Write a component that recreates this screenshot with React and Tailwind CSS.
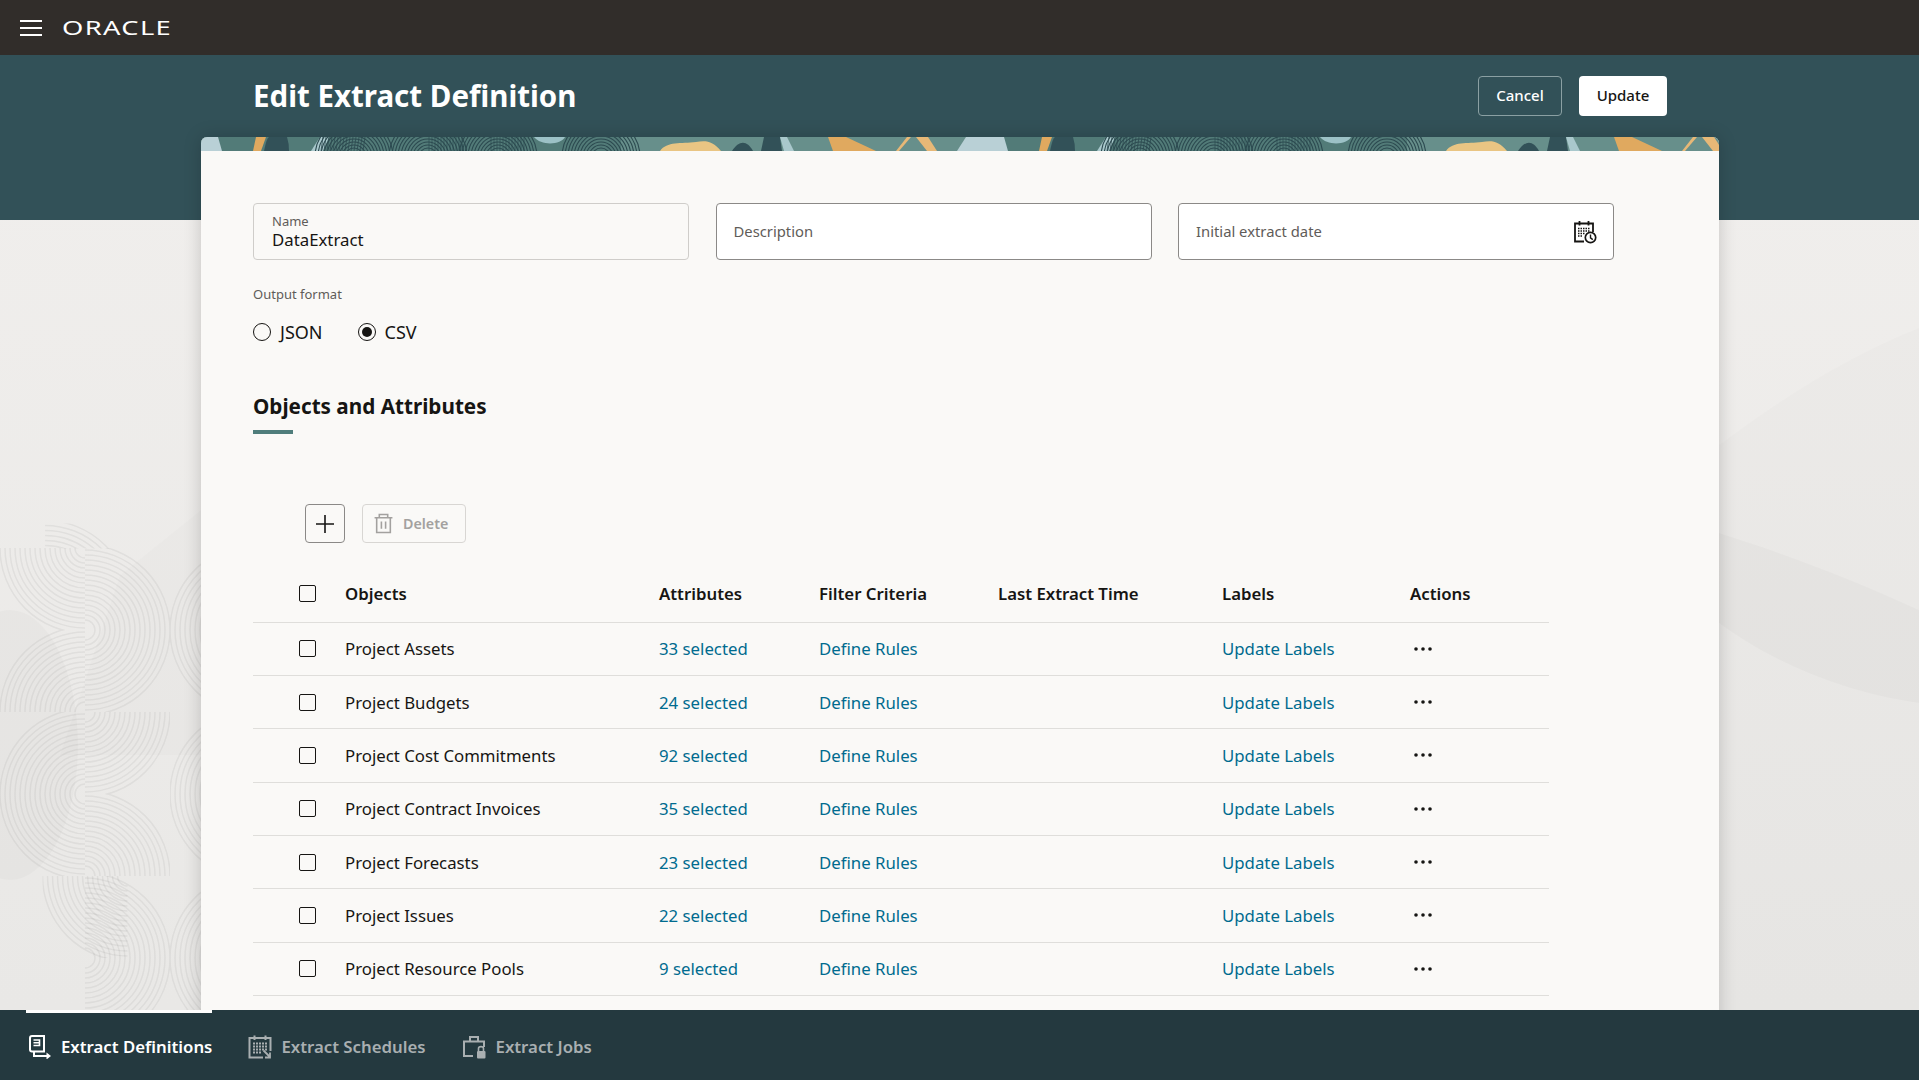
const ROWS = [
  ['Project Assets', '33 selected'],
  ['Project Budgets', '24 selected'],
  ['Project Cost Commitments', '92 selected'],
  ['Project Contract Invoices', '35 selected'],
  ['Project Forecasts', '23 selected'],
  ['Project Issues', '22 selected'],
  ['Project Resource Pools', '9 selected'],
]

const RADII = Array.from({ length: 16 }, (_, i) => 10 + i * 5)

// col, row, corner the arcs circle around (0 tl, 1 tr, 2 br, 3 bl), optional cut height
const TILES = [
  [0.53, -0.3, 3, 25],
  [0, 0, 1], [1, 0, 3], [2, 0, 2],
  [0, 1, 2], [1, 1, 0], [2, 1, 1],
  [0, 2, 2], [1, 2, 0], [2, 2, 2],
  [0, 3, 1], [1, 3, 3], [2, 3, 1],
  [0.5, 4, 1], [1, 4, 3], [2, 4, 2],
  [1, 5, 0], [2, 5, 1],
]

function ArcTiles() {
  const w = 85
  const h = 82
  return (
    <svg className="absolute left-0 top-0" width="201" height="955" viewBox="0 0 201 955" fill="none">
      <ellipse cx="10" cy="690" rx="68" ry="135" fill="#000" fillOpacity="0.02" />
      <path d="M120 520 L201 455 V700 H60 Z" fill="#000" fillOpacity="0.01" />
      {TILES.map(([c, r, corner, cut], i) => {
        const cx = corner === 1 || corner === 2 ? w : 0
        const cy = corner === 2 || corner === 3 ? h : 0
        return (
          <svg key={i} x={c * w} y={493 + r * h} width={w} height={cut || h}>
            {RADII.map(rad => (
              <circle key={rad} cx={cx} cy={cy} r={rad} stroke="#000" strokeOpacity="0.05" strokeWidth="1.5" />
            ))}
          </svg>
        )
      })}
    </svg>
  )
}

function RightCurves() {
  return (
    <svg className="absolute left-[1719px] top-[165px]" width="200" height="790" viewBox="0 0 200 790" fill="none">
      <path d="M0 225 C60 180 130 135 200 108 V790 H0 Z" fill="#000" fillOpacity="0.012" />
      <path d="M0 313 C70 335 135 360 200 390 V483 C120 472 50 440 0 403 Z" fill="#000" fillOpacity="0.018" />
    </svg>
  )
}

function BannerTile() {
  return (
    <>
      <rect x="0" y="0" width="420" height="14" fill="#527b78" />
      <rect x="420" y="0" width="366" height="14" fill="#678f8b" />
      <path d="M-30 14 L-21 0 H17 L21 14 Z" fill="#b9d0d6" />
      <path d="M55 0 H65 L60 14 H52 Z" fill="#e0a95f" />
      <path d="M63 14 Q66 0 68 0 H86 Q88 6 88 14 Z" fill="#325158" />
      <path d="M119 0 H128 L122 14 H110 Z" fill="#a9c8cc" />
      {[153, 227, 297, 400].map(cx => (
        <g key={cx}>
          {[5, 8, 11, 14, 17, 20, 23, 26, 29, 32, 35].map(r => (
            <circle key={r} cx={cx} cy="20" r={r + 4} fill="none" stroke="#2c4a50" strokeWidth="1.1" />
          ))}
        </g>
      ))}
      {Array.from({ length: 15 }, (_, i) => (
        <path key={i} d={`M${122 + i * 3} 0 L${120 + i * 3} 14`} stroke="#2c4a50" strokeWidth="0.8" />
      ))}
      {Array.from({ length: 12 }, (_, i) => (
        <path key={i} d={`M${228 + i * 3} 0 V14`} stroke="#2c4a50" strokeWidth="0.7" />
      ))}
      {Array.from({ length: 12 }, (_, i) => (
        <path key={i} d={`M${290 + i * 3} 0 V14`} stroke="#2c4a50" strokeWidth="0.7" />
      ))}
      <path d="M333 0 H364 C360 8 340 9 333 0 Z" fill="#9cc1c6" />
      <path d="M459 14 C466 4 480 7 495 5 C505 3 512 4 520 14 Z" fill="#e9c583" />
      <path d="M531 14 C538 3 546 3 552 14 Z" fill="#325158" />
      <path d="M563 0 H579 L581 14 H560 Z" fill="#325158" />
      <path d="M579 0 H586 L593 14 H583 Z" fill="#a9c8cc" />
      <path d="M627 0 H645 L675 14 H632 Z" fill="#e0a95f" />
      <path d="M706 0 H710 L698 14 H695 Z" fill="#e7b877" />
      <path d="M715 0 H727 L736 14 H726 Z" fill="#e7b877" />
      <path d="M766 0 H799 L806 14 H757 Z" fill="#b9d0d6" />
    </>
  )
}

function Banner() {
  return (
    <svg className="block" width="1518" height="14" viewBox="0 0 1518 14">
      <BannerTile />
      <g transform="translate(786 0)">
        <BannerTile />
      </g>
    </svg>
  )
}

function Field({ label, value, filled, children }) {
  return (
    <div className={`flex h-[57px] w-[436px] items-center justify-between rounded-[4px] border ${filled ? 'border-[#cfcdca] px-[18px]' : 'border-[#8b8987] bg-white px-[17px]'}`}>
      {filled ? (
        <div className="flex flex-col pt-[2px]">
          <span className="text-[13px] leading-[15px] text-[#5f5c59]">{label}</span>
          <span className="text-[16.8px] leading-[22px] text-[#161513]">{value}</span>
        </div>
      ) : (
        <span className="text-[14.8px] text-[#5f5c59]">{label}</span>
      )}
      {children}
    </div>
  )
}

function Radio({ label, checked }) {
  return (
    <label className="flex items-center gap-[9px] text-[18px] text-[#161513]">
      <span className="flex h-[18px] w-[18px] items-center justify-center rounded-full border border-[#161513]">
        {checked && <span className="h-[10px] w-[10px] rounded-full bg-[#161513]" />}
      </span>
      {label}
    </label>
  )
}

function Checkbox() {
  return <span className="block h-[17px] w-[17px] rounded-[2px] border-[1.5px] border-[#161513]" />
}

function CalendarClock() {
  return (
    <svg className="-mr-[1px]" width="24" height="24" viewBox="0 0 24 24" fill="none" stroke="#161513">
      <path d="M11 21.5H2V3.5H20V12" strokeWidth="1.8" />
      <path d="M6.5 1V5.5M15.5 1V5.5" strokeWidth="1.8" />
      <path d="M5 8.5H17M5 11H17M5 13.5H12M5 16H10" strokeWidth="1.6" strokeDasharray="1.5 1" />
      <circle cx="17.5" cy="17.5" r="5.2" fill="#fff" strokeWidth="1.7" />
      <path d="M17.5 14.5V17.8L19.8 19.6" strokeWidth="1.4" />
    </svg>
  )
}

function TrashIcon() {
  return (
    <svg width="21" height="21" viewBox="0 0 20 20" fill="none" stroke="#a3a19f" strokeWidth="1.5">
      <path d="M1.5 4.5H18.5M6 4.5V1.5H14V4.5" />
      <path d="M3.5 4.5V18.5H16.5V4.5" />
      <path d="M8 8V15M12 8V15" />
    </svg>
  )
}

function DefinitionsIcon() {
  return (
    <svg className="ml-[2px]" width="24" height="24" viewBox="0 0 24 24" fill="none" stroke="#fff" strokeWidth="2">
      <path d="M4 16.5C2.5 16.5 2 16 2 14.5V3C2 2 2.5 1 4 1H16V16.5H4Z" />
      <path d="M5.5 5H11.5V10.5H5.5M5.5 7.8H11.5M11.5 5V10.5" strokeWidth="1.6" />
      <path d="M6 16.5V21H20" />
      <path d="M18.5 17.5L23 21L18.5 24.5Z" fill="#fff" stroke="none" />
    </svg>
  )
}

function SchedulesIcon() {
  return (
    <svg width="24" height="24" viewBox="0 0 24 24" fill="none" stroke="#a9afb1">
      <path d="M15 22.5H1.5V3H22.5V16" strokeWidth="2" />
      <path d="M6.5 0.5V5M17.5 0.5V5" strokeWidth="2" />
      <path d="M5 8.5H19M5 11.5H19M5 14.5H19M5 17.5H13" strokeWidth="2" strokeDasharray="2 1" />
      <path d="M15.5 15.5L22 22M22 17.5V22.5H17" strokeWidth="1.8" />
    </svg>
  )
}

function JobsIcon() {
  return (
    <svg width="25" height="24" viewBox="0 0 25 24" fill="none" stroke="#a9afb1" strokeWidth="2">
      <path d="M11 21H2V6.5H22V12" />
      <path d="M8 6.5V2H16V6.5" />
      <path d="M16.5 16V13.5C16.5 11 21.5 11 21.5 13.5V16" strokeWidth="1.6" />
      <rect x="15" y="16" width="8.5" height="7.5" rx="1" fill="#a9afb1" stroke="none" />
    </svg>
  )
}

function Dots() {
  return (
    <svg width="20" height="6" viewBox="0 0 20 6" fill="#161513">
      <circle cx="3" cy="3" r="1.8" />
      <circle cx="10" cy="3" r="1.8" />
      <circle cx="17" cy="3" r="1.8" />
    </svg>
  )
}

const GRID = 'grid grid-cols-[92px_314px_160px_179px_224px_188px_139px] items-center border-b border-[#dfdedb]'

export default function App() {
  return (
    <div className="flex h-screen w-full flex-col overflow-hidden font-['Noto_Sans',sans-serif] text-[#161513]">
      {/* Top bar */}
      <header className="flex h-[55px] shrink-0 items-center bg-[#312d2a] pl-5">
        <svg width="22" height="16" viewBox="0 0 22 16" stroke="#fff" strokeWidth="2">
          <path d="M0 1H22M0 8H22M0 15H22" />
        </svg>
        <span className="ml-[20px] origin-left scale-x-[1.4] text-[19.5px] leading-none tracking-[0.05em] text-white">ORACLE</span>
      </header>

      <main className="relative min-h-0 flex-1 overflow-hidden bg-gradient-to-b from-[#f1efed] to-[#e9e8e6]">
        <ArcTiles />
        <RightCurves />

        {/* Teal band with title */}
        <div className="relative h-[165px] bg-[#325158] pl-[253px] pr-[252px] pt-[21px]">
          <div className="flex h-10 items-center justify-between">
            <h1 className="text-[29.5px] font-bold text-white">Edit Extract Definition</h1>
            <div className="flex gap-[17px]">
              <button className="h-10 w-[84px] rounded-[4px] border border-[#8ba0a3] pb-[1px] text-[15px] font-medium text-white">Cancel</button>
              <button className="h-10 w-[88px] rounded-[4px] bg-white pb-[1px] text-[15px] font-medium text-[#161513]">Update</button>
            </div>
          </div>
        </div>

        {/* Card */}
        <div className="relative -mt-[83px] ml-[201px] w-[1518px] overflow-hidden rounded-t-[6px] bg-[#faf9f7] shadow-[0_0_18px_rgba(0,0,0,0.18)]">
          <Banner />
          <div className="pl-[52px] pt-[52px]">
            <div className="flex gap-[26.5px]">
              <Field label="Name" value="DataExtract" filled />
              <Field label="Description" />
              <Field label="Initial extract date">
                <CalendarClock />
              </Field>
            </div>

            <p className="mt-[25px] text-[13px] leading-[18px] text-[#5f5c59]">Output format</p>
            <div className="mt-[17px] flex h-6 gap-[35px]">
              <Radio label="JSON" />
              <Radio label="CSV" checked />
            </div>

            <h2 className="mt-[48px] text-[20.7px] font-bold leading-[28px]">Objects and Attributes</h2>
            <div className="mt-[10px] h-1 w-10 bg-[#4f7d7b]" />

            <div className="ml-[52px] mt-[70px] flex gap-[17px]">
              <button className="flex h-[39px] w-10 items-center justify-center rounded-[4px] border border-[#8b8987]">
                <svg width="20" height="20" viewBox="0 0 20 20" stroke="#161513" strokeWidth="1.6">
                  <path d="M10 1V19M1 10H19" />
                </svg>
              </button>
              <button className="flex h-[39px] w-[104px] items-center gap-[9px] rounded-[4px] border border-[#d8d6d3] pl-[10px] text-[14.3px] font-semibold text-[#a3a19f]">
                <TrashIcon />
                Delete
              </button>
            </div>

            {/* Table */}
            <div className="mt-[23px] w-[1296px] text-[16.8px]">
              <div className={`${GRID} h-[56.6px] font-semibold`}>
                <span className="pl-[46px]"><Checkbox /></span>
                <span>Objects</span>
                <span>Attributes</span>
                <span>Filter Criteria</span>
                <span>Last Extract Time</span>
                <span>Labels</span>
                <span>Actions</span>
              </div>
              {ROWS.map(([name, count]) => (
                <div key={name} className={`${GRID} h-[53.35px]`}>
                  <span className="pl-[46px]"><Checkbox /></span>
                  <span>{name}</span>
                  <span className="text-[#006b8f]">{count}</span>
                  <span className="text-[#006b8f]">Define Rules</span>
                  <span />
                  <span className="text-[#006b8f]">Update Labels</span>
                  <span className="flex pl-[3px]"><Dots /></span>
                </div>
              ))}
              <div className="h-10" />
            </div>
          </div>
        </div>
      </main>

      {/* Bottom tabs */}
      <nav className="flex h-[70px] shrink-0 items-stretch gap-[36px] bg-[#24393f] pl-[26px] text-[16.8px] font-semibold">
        <a className="relative flex items-center gap-[9px] pt-[4px] text-white">
          <span className="absolute left-0 right-0 top-0 h-[3px] bg-white" />
          <DefinitionsIcon />
          Extract Definitions
        </a>
        <a className="flex items-center gap-[9px] pt-[4px] text-[#a9afb1]">
          <SchedulesIcon />
          Extract Schedules
        </a>
        <a className="flex items-center gap-[9px] pt-[4px] text-[#a9afb1]">
          <JobsIcon />
          Extract Jobs
        </a>
      </nav>
    </div>
  )
}
